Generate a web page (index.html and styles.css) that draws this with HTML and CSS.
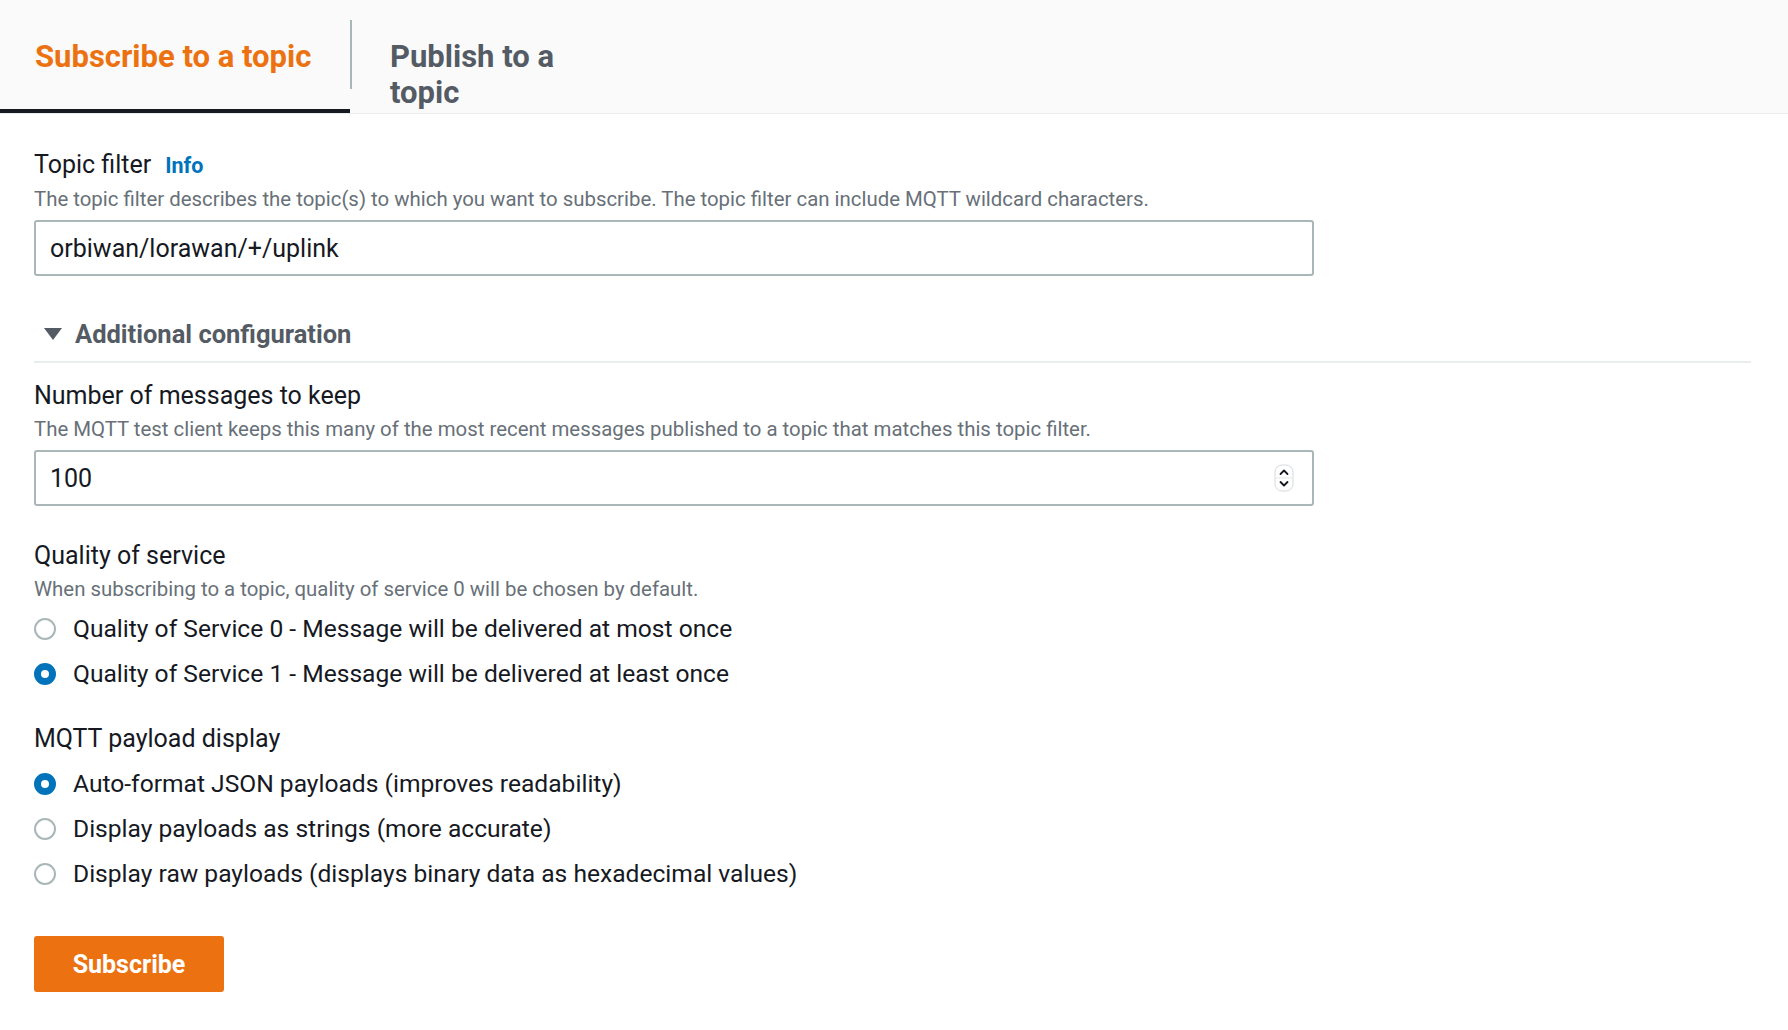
FILE: index.html
```html
<!DOCTYPE html>
<html lang="en">
<head>
<meta charset="utf-8">
<title>MQTT test client</title>
<link rel="stylesheet" href="styles.css">
</head>
<body>
<div class="tabs">
  <div class="tab tab-active">Subscribe to a topic</div>
  <div class="tab-divider"></div>
  <div class="tab tab-inactive">Publish to a topic</div>
</div>
<form class="content">
  <div class="label-row"><span class="label">Topic filter</span><a class="info">Info</a></div>
  <div class="desc">The topic filter describes the topic(s) to which you want to subscribe. The topic filter can include MQTT wildcard characters.</div>
  <div class="input">orbiwan/lorawan/+/uplink</div>

  <div class="expander">
    <svg class="caret" width="20" height="16" viewBox="0 0 20 16"><polygon points="1,2 19,2 10,14" fill="#545b64"/></svg>
    <span>Additional configuration</span>
  </div>
  <div class="rule"></div>

  <div class="label-row label-2"><span class="label">Number of messages to keep</span></div>
  <div class="desc">The MQTT test client keeps this many of the most recent messages published to a topic that matches this topic filter.</div>
  <div class="input input-number">
    <span>100</span>
    <svg class="spinner" width="20" height="28" viewBox="0 0 20 28">
      <rect x="1" y="1" width="18" height="26" rx="7" fill="#fff" stroke="#d5dbdb" stroke-width="1"/>
      <line x1="2" y1="14" x2="18" y2="14" stroke="#e3e6e6" stroke-width="1"/>
      <polyline points="6.5,10 10,6.5 13.5,10" fill="none" stroke="#16191f" stroke-width="1.8" stroke-linecap="round" stroke-linejoin="round"/>
      <polyline points="6.5,18 10,21.5 13.5,18" fill="none" stroke="#16191f" stroke-width="1.8" stroke-linecap="round" stroke-linejoin="round"/>
    </svg>
  </div>

  <div class="label-row label-3"><span class="label">Quality of service</span></div>
  <div class="desc">When subscribing to a topic, quality of service 0 will be chosen by default.</div>
  <div class="radios">
    <div class="radio"><span class="dot"></span><span>Quality of Service 0 - Message will be delivered at most once</span></div>
    <div class="radio"><span class="dot checked"></span><span>Quality of Service 1 - Message will be delivered at least once</span></div>
  </div>

  <div class="label-row label-3"><span class="label">MQTT payload display</span></div>
  <div class="radios radios-2">
    <div class="radio"><span class="dot checked"></span><span>Auto-format JSON payloads (improves readability)</span></div>
    <div class="radio"><span class="dot"></span><span>Display payloads as strings (more accurate)</span></div>
    <div class="radio"><span class="dot"></span><span>Display raw payloads (displays binary data as hexadecimal values)</span></div>
  </div>

  <div class="button-row"><button type="button" class="btn-primary">Subscribe</button></div>
</form>
</body>
</html>
```

FILE: styles.css
```css
* { box-sizing: border-box; }
html, body { margin: 0; padding: 0; background: #ffffff; }
body {
  font-family: Roboto, "Liberation Sans", sans-serif;
  color: #16191f;
  width: 1788px;
  height: 1030px;
  overflow: hidden;
}

.tabs {
  display: flex;
  align-items: flex-start;
  height: 114px;
  background: #fafafa;
  border-bottom: 1px solid #eaeded;
}
.tab {
  font-size: 31px;
  font-weight: 700;
  line-height: 36px;
  padding-top: 39px;
}
.tab-active {
  width: 350px;
  height: 113px;
  padding-left: 35px;
  color: #ec7211;
  border-bottom: 4px solid #16191f;
}
.tab-divider {
  width: 2px;
  height: 69px;
  margin-top: 20px;
  background: #aab7b8;
}
.tab-inactive {
  padding-left: 38px;
  width: 240px;
  color: #545b64;
}

.content {
  padding: 0 37px 0 34px;
}
.label-row {
  display: flex;
  align-items: baseline;
  gap: 14px;
  margin-top: 36px;
  line-height: 30px;
}
.label { font-size: 25px; color: #16191f; }
.info { font-size: 21.5px; font-weight: 700; color: #0073bb; }
.label-2 { margin-top: 18px; }
.label-3 { margin-top: 35px; }

.desc {
  margin-top: 6px;
  font-size: 20.4px;
  line-height: 24px;
  color: #687078;
}
.input {
  margin-top: 9px;
  width: 1280px;
  height: 56px;
  border: 2px solid #aab7b8;
  border-radius: 3px;
  padding: 0 14px;
  display: flex;
  align-items: center;
  justify-content: space-between;
  font-size: 25px;
  color: #16191f;
}
.spinner { margin-right: 4px; }

.expander {
  margin-top: 43px;
  display: flex;
  align-items: center;
  gap: 12px;
  padding-left: 9px;
  font-size: 25.5px;
  font-weight: 700;
  line-height: 30px;
  color: #545b64;
}
.rule {
  margin-top: 12px;
  height: 2px;
  background: #eaeded;
}

.radios {
  margin-top: 13px;
  display: flex;
  flex-direction: column;
  gap: 15px;
}
.radios-2 { margin-top: 15px; }
.radio {
  display: flex;
  align-items: center;
  gap: 17px;
  font-size: 24.6px;
  line-height: 30px;
}
.dot {
  width: 22px;
  height: 22px;
  border-radius: 50%;
  border: 2px solid #aab7b8;
  background: #fff;
  flex: none;
}
.dot.checked {
  border: 7px solid #0073bb;
}

.button-row { margin-top: 47px; }
.btn-primary {
  width: 190px;
  height: 56px;
  border: none;
  border-radius: 3px;
  background: #ec7211;
  color: #ffffff;
  font-family: Roboto, "Liberation Sans", sans-serif;
  font-size: 25px;
  font-weight: 700;
}
```
